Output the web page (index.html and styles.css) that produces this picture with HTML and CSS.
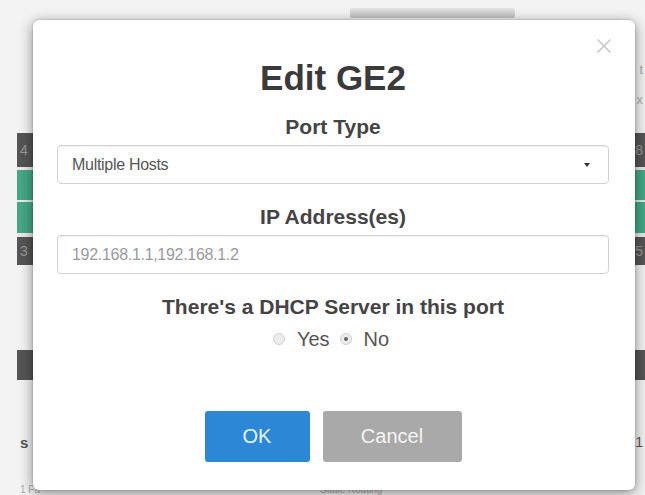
FILE: index.html
```html
<!DOCTYPE html>
<html>
<head>
<meta charset="utf-8">
<link rel="stylesheet" href="styles.css">
</head>
<body>
<div class="page">
  <div class="top-area">
    <div class="hdr-bar"></div>
    <div class="side-txt t1">t</div>
    <div class="side-txt t2">x</div>
  </div>
  <div class="row dark h34"><span class="cell">4</span><span class="cell-r">8</span></div>
  <div class="gap g3"></div>
  <div class="row green h30"></div>
  <div class="gap g2"></div>
  <div class="row green h31"></div>
  <div class="gap g4"></div>
  <div class="row dark h28"><span class="cell">3</span><span class="cell-r">5</span></div>
  <div class="spacer s85"></div>
  <div class="row dark h30"></div>
  <div class="spacer s50"></div>
  <div class="row plain h24"><span class="cell strong">s</span><span class="cell-r">1</span></div>
  <div class="spacer s31"></div>
  <div class="row plain h10 faint"><span class="cell">1 Fa</span><span class="mid">Static Routing</span></div>
</div>

<div class="modal">
  <button class="close" aria-label="close">
    <svg width="16" height="16" viewBox="0 0 16 16"><path d="M2 2 L14 14 M14 2 L2 14" stroke="#c8c8c8" stroke-width="1.6" fill="none" stroke-linecap="round"/></svg>
  </button>
  <h1 class="title">Edit GE2</h1>
  <div class="label">Port Type</div>
  <div class="select">
    <span>Multiple Hosts</span>
    <span class="caret"></span>
  </div>
  <div class="label lbl2">IP Address(es)</div>
  <div class="input"><span class="ph">192.168.1.1,192.168.1.2</span></div>
  <div class="label lbl2">There's a DHCP Server in this port</div>
  <div class="radios">
    <span class="radio"></span><span class="rtxt">Yes</span>
    <span class="radio on"></span><span class="rtxt">No</span>
  </div>
  <div class="buttons">
    <button class="btn ok">OK</button>
    <button class="btn cancel">Cancel</button>
  </div>
</div>
</body>
</html>
```
FILE: styles.css
```css
html, body {
  margin: 0;
  padding: 0;
}
body {
  width: 645px;
  height: 495px;
  overflow: hidden;
  background: #f3f3f3;
  font-family: "Liberation Sans", Arial, sans-serif;
  position: relative;
}
.page {
  padding-left: 17px;
}
.top-area {
  height: 133px;
  position: relative;
}
.hdr-bar {
  margin-left: 333px;
  width: 165px;
  height: 10px;
  position: relative;
  top: 8px;
  background: linear-gradient(#e4e4e4, #bdbdbd);
  border-radius: 2px;
}
.side-txt {
  position: absolute;
  right: 2px;
  color: #aaa;
  font-size: 13px;
}
.t1 { top: 62px; }
.t2 { top: 92px; }
.row {
  display: flex;
  align-items: center;
  justify-content: space-between;
  position: relative;
  color: #9a9a9a;
  font-size: 14px;
}
.dark { background: #555; }
.green { background: #44a886; }
.plain { background: transparent; color: #555; }
.faint { color: #aaa; font-size: 10px; line-height: 10px; align-items: flex-start; }
.h34 { height: 34px; }
.h30 { height: 30px; }
.h31 { height: 31px; }
.h28 { height: 28px; }
.h24 { height: 24px; }
.h10 { height: 10px; }
.gap { background: #e9e9e9; }
.g2 { height: 2px; }
.g3 { height: 3px; }
.g4 { height: 4px; }
.s85 { height: 85px; }
.s50 { height: 50px; }
.s31 { height: 31px; }
.cell { padding-left: 3px; }
.cell-r { padding-right: 2px; }
.strong { font-weight: bold; font-size: 15px; }
.mid { position: absolute; left: 303px; top: 0; }

.modal {
  position: absolute;
  left: 33px;
  top: 20px;
  width: 602px;
  height: 470px;
  box-sizing: border-box;
  background: #fff;
  border-radius: 6px;
  box-shadow: 0 3px 14px rgba(0, 0, 0, 0.45), 0 0 2px rgba(0, 0, 0, 0.3);
  padding: 0 26px 0 24px;
  display: flex;
  flex-direction: column;
  align-items: stretch;
}
.close {
  position: absolute;
  left: 563px;
  top: 18px;
  width: 16px;
  height: 16px;
  padding: 0;
  border: 0;
  background: none;
  line-height: 0;
}
.title {
  margin: 40px 0 0;
  font-size: 35px;
  line-height: 35px;
  font-weight: bold;
  color: #3a3a3a;
  text-align: center;
}
.label {
  margin-top: 20px;
  font-size: 21px;
  line-height: 24px;
  font-weight: bold;
  color: #444;
  text-align: center;
}
.lbl2 {
  margin-top: 21px;
}
.select, .input {
  margin-top: 6px;
  height: 39px;
  box-sizing: border-box;
  border: 1px solid #d2d2d2;
  border-radius: 4px;
  box-shadow: inset 0 1px 1px rgba(0, 0, 0, 0.06);
  display: flex;
  align-items: center;
  justify-content: space-between;
  padding: 0 18px 0 14px;
  font-size: 16px;
  color: #555;
  letter-spacing: -0.3px;
}
.ph {
  color: #9a9a9a;
}
.caret {
  width: 0;
  height: 0;
  border-left: 3.5px solid transparent;
  border-right: 3.5px solid transparent;
  border-top: 4px solid #333;
}
.radios {
  margin-top: 8px;
  height: 24px;
  display: flex;
  align-items: center;
  justify-content: center;
  font-size: 20px;
  color: #555;
}
.radio {
  width: 10px;
  height: 10px;
  border-radius: 50%;
  border: 1px solid #d0d0d0;
  background: #ececec;
  margin-right: 12px;
  margin-left: 6px;
  position: relative;
}
.radio:first-child { margin-left: 0; }
.radio.on::after {
  content: "";
  position: absolute;
  left: 3px;
  top: 3px;
  width: 4px;
  height: 4px;
  border-radius: 50%;
  background: #666;
}
.rtxt { line-height: 24px; margin-right: 4px; }
.buttons {
  margin-top: 60px;
  display: flex;
  justify-content: center;
  gap: 13px;
}
.btn {
  height: 51px;
  border: 0;
  border-radius: 3px;
  font-family: "Liberation Sans", Arial, sans-serif;
  font-size: 20px;
  color: #fff;
  padding: 0;
}
.ok {
  width: 105px;
  background: #2c87d6;
  color: #eaf4ff;
}
.cancel {
  width: 139px;
  background: #a9a9a9;
  color: #f4f4f4;
}
```
